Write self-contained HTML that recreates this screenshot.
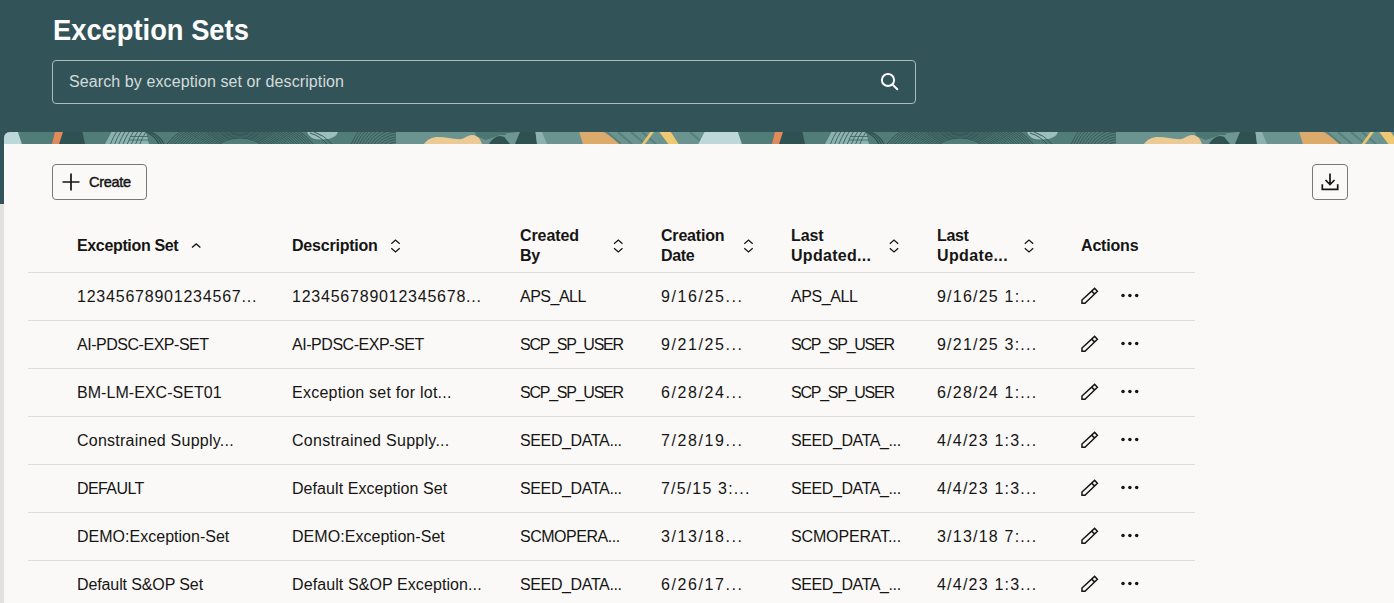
<!DOCTYPE html>
<html><head><meta charset="utf-8">
<style>
html,body{margin:0;padding:0;}
body{width:1394px;height:603px;overflow:hidden;position:relative;background:#e2e1df;font-family:"Liberation Sans",sans-serif;color:#161513;}
#hdr{position:absolute;left:0;top:0;width:1394px;height:204px;background:#325459;}
#title{position:absolute;left:53px;top:12px;font-size:29.5px;line-height:36px;font-weight:700;color:#fff;white-space:nowrap;transform:scaleX(0.926);transform-origin:0 0;}
#search{position:absolute;left:52px;top:60px;width:862px;height:42px;border:1px solid #adbcbc;border-radius:4px;}
#ph{position:absolute;left:16px;top:11px;font-size:16px;line-height:20px;color:#d4dbd9;white-space:nowrap;letter-spacing:0.1px;}
#panel{position:absolute;left:4px;top:132px;width:1400px;height:480px;background:#faf9f8;border-top-left-radius:6px;overflow:hidden;}
#banner{position:absolute;left:0;top:0;}
.btn{position:absolute;border:1px solid #787878;border-radius:4px;box-sizing:border-box;}
.t{position:absolute;white-space:nowrap;font-size:16px;line-height:20px;}
.h{font-weight:700;}
.line{position:absolute;left:24px;width:1167px;height:1px;background:#dfddda;}
#icons{position:absolute;left:0;top:0;}
</style></head>
<body>
<div id="hdr">
  <div id="title">Exception Sets</div>
  <div id="search"><div id="ph">Search by exception set or description</div></div>
</div>
<div id="panel">
  <svg id="banner" width="1400" height="12" viewBox="0 0 1400 12"><rect x="0" y="0" width="1400" height="12" fill="#517c77"/><g transform="translate(-4 0)"><polygon points="-15.5,0 18,0 21.8,12 -21.6,12" fill="#bed7d9"/><polygon points="54.9,0 63.1,0 59.2,12 52,12" fill="#e3895a"/><polygon points="63.1,0 82.5,0 85,12 59.2,12" fill="#2f5152"/><polygon points="111.5,0 146,0 149,12 105,12" fill="#8db3b0"/><path d="M116.5 0 Q113.0 5 110.5 12" stroke="#3b5f5e" stroke-width="0.9" fill="none"/><path d="M120.7 0 Q117.2 5 114.7 12" stroke="#3b5f5e" stroke-width="0.9" fill="none"/><path d="M124.9 0 Q121.4 5 118.9 12" stroke="#3b5f5e" stroke-width="0.9" fill="none"/><path d="M129.1 0 Q125.6 5 123.1 12" stroke="#3b5f5e" stroke-width="0.9" fill="none"/><path d="M133.3 0 Q129.8 5 127.30000000000001 12" stroke="#3b5f5e" stroke-width="0.9" fill="none"/><path d="M137.5 0 Q134.0 5 131.5 12" stroke="#3b5f5e" stroke-width="0.9" fill="none"/><path d="M141.7 0 Q138.2 5 135.7 12" stroke="#3b5f5e" stroke-width="0.9" fill="none"/><path d="M145.9 0 Q142.4 5 139.9 12" stroke="#3b5f5e" stroke-width="0.9" fill="none"/><path d="M130 4.5H148M129 8H149" stroke="#3b5f5e" stroke-width="0.8"/><path d="M146.0 0 Q155.0 4 159.0 12" stroke="#2f4f50" stroke-width="1.1" fill="none"/><path d="M148.5 0 Q157.5 4 161.5 12" stroke="#2f4f50" stroke-width="1.1" fill="none"/><path d="M151.0 0 Q160.0 4 164.0 12" stroke="#2f4f50" stroke-width="1.1" fill="none"/><ellipse cx="240" cy="40" rx="36.0" ry="34.0" stroke="#2f4f50" stroke-width="1" fill="none" opacity="0.85"/><ellipse cx="240" cy="40" rx="38.5" ry="35.2" stroke="#2f4f50" stroke-width="1" fill="none" opacity="0.85"/><ellipse cx="240" cy="40" rx="41.0" ry="36.5" stroke="#2f4f50" stroke-width="1" fill="none" opacity="0.85"/><ellipse cx="240" cy="40" rx="43.5" ry="37.8" stroke="#2f4f50" stroke-width="1" fill="none" opacity="0.85"/><ellipse cx="240" cy="40" rx="46.0" ry="39.0" stroke="#2f4f50" stroke-width="1" fill="none" opacity="0.85"/><ellipse cx="240" cy="40" rx="48.5" ry="40.2" stroke="#2f4f50" stroke-width="1" fill="none" opacity="0.85"/><ellipse cx="240" cy="40" rx="51.0" ry="41.5" stroke="#2f4f50" stroke-width="1" fill="none" opacity="0.85"/><ellipse cx="240" cy="40" rx="53.5" ry="42.8" stroke="#2f4f50" stroke-width="1" fill="none" opacity="0.85"/><ellipse cx="240" cy="40" rx="56.0" ry="44.0" stroke="#2f4f50" stroke-width="1" fill="none" opacity="0.85"/><ellipse cx="240" cy="40" rx="58.5" ry="45.2" stroke="#2f4f50" stroke-width="1" fill="none" opacity="0.85"/><ellipse cx="240" cy="40" rx="61.0" ry="46.5" stroke="#2f4f50" stroke-width="1" fill="none" opacity="0.85"/><ellipse cx="240" cy="40" rx="63.5" ry="47.8" stroke="#2f4f50" stroke-width="1" fill="none" opacity="0.85"/><ellipse cx="240" cy="40" rx="66.0" ry="49.0" stroke="#2f4f50" stroke-width="1" fill="none" opacity="0.85"/><ellipse cx="240" cy="40" rx="68.5" ry="50.2" stroke="#2f4f50" stroke-width="1" fill="none" opacity="0.85"/><ellipse cx="240" cy="40" rx="71.0" ry="51.5" stroke="#2f4f50" stroke-width="1" fill="none" opacity="0.85"/><ellipse cx="240" cy="40" rx="73.5" ry="52.8" stroke="#2f4f50" stroke-width="1" fill="none" opacity="0.85"/><ellipse cx="240" cy="40" rx="76.0" ry="54.0" stroke="#2f4f50" stroke-width="1" fill="none" opacity="0.85"/><ellipse cx="240" cy="40" rx="78.5" ry="55.2" stroke="#2f4f50" stroke-width="1" fill="none" opacity="0.85"/><ellipse cx="240" cy="40" rx="81.0" ry="56.5" stroke="#2f4f50" stroke-width="1" fill="none" opacity="0.85"/><ellipse cx="240" cy="40" rx="83.5" ry="57.8" stroke="#2f4f50" stroke-width="1" fill="none" opacity="0.85"/><path d="M307 0 Q309 8 323 7.6 Q336 7 338 0Z" fill="#9bbfbc"/><path d="M310 1 Q320 4 327 12M314 0 Q324 3 332 12" stroke="#2f4f50" stroke-width="0.9" fill="none"/><circle cx="398" cy="30" r="20.0" stroke="#2f4f50" stroke-width="0.9" fill="none" opacity="0.85"/><circle cx="398" cy="30" r="22.5" stroke="#2f4f50" stroke-width="0.9" fill="none" opacity="0.85"/><circle cx="398" cy="30" r="25.0" stroke="#2f4f50" stroke-width="0.9" fill="none" opacity="0.85"/><circle cx="398" cy="30" r="27.5" stroke="#2f4f50" stroke-width="0.9" fill="none" opacity="0.85"/><circle cx="398" cy="30" r="30.0" stroke="#2f4f50" stroke-width="0.9" fill="none" opacity="0.85"/><circle cx="398" cy="30" r="32.5" stroke="#2f4f50" stroke-width="0.9" fill="none" opacity="0.85"/><circle cx="398" cy="30" r="35.0" stroke="#2f4f50" stroke-width="0.9" fill="none" opacity="0.85"/><circle cx="398" cy="30" r="37.5" stroke="#2f4f50" stroke-width="0.9" fill="none" opacity="0.85"/><circle cx="398" cy="30" r="40.0" stroke="#2f4f50" stroke-width="0.9" fill="none" opacity="0.85"/><circle cx="398" cy="30" r="42.5" stroke="#2f4f50" stroke-width="0.9" fill="none" opacity="0.85"/><circle cx="398" cy="30" r="45.0" stroke="#2f4f50" stroke-width="0.9" fill="none" opacity="0.85"/><circle cx="398" cy="30" r="47.5" stroke="#2f4f50" stroke-width="0.9" fill="none" opacity="0.85"/><circle cx="398" cy="30" r="50.0" stroke="#2f4f50" stroke-width="0.9" fill="none" opacity="0.85"/><rect x="396" y="0" width="308" height="12" fill="#6b9490"/><path d="M424 12 C428 7 432 5 438 5 C446 5 452 7 459 7.2 C465 7.4 467 3 472 3 C477 3 480 6 482 12Z" fill="#ecca96"/><polygon points="475,0 522,0 520,3 500,3 486,8 476,4" fill="#4c7672"/><path d="M489 12 Q494 4 500 4 Q506 4 511 12Z" fill="#2f5152"/><polygon points="506,1.5 518,0 521,0 516,12 510,12 505,6" fill="#6e9692"/><polygon points="520,0 535.5,0 537,12 515,12" fill="#2f5152"/><polygon points="535.5,0 542,0 547,12 537,12" fill="#8cb1ae"/><polygon points="579.3,0 603.7,0 622.4,12 582.9,12" fill="#dcab6b"/><path d="M607 0 L621 12" stroke="#57817d" stroke-width="2.2"/><path d="M618 0 L632 12" stroke="#57817d" stroke-width="2.2"/><path d="M631 0 L645 12" stroke="#57817d" stroke-width="2.2"/><path d="M642 0 L656 12" stroke="#57817d" stroke-width="2.2"/><path d="M690 0 L704 12" stroke="#57817d" stroke-width="2.2"/><polygon points="650.3,0 654,0 645,12 641.7,12" fill="#ecc56f"/><polygon points="659.3,0 670.8,0 678.7,12 668.3,12" fill="#efc872"/></g><g transform="translate(716 0)"><polygon points="-15.5,0 18,0 21.8,12 -21.6,12" fill="#bed7d9"/><polygon points="54.9,0 63.1,0 59.2,12 52,12" fill="#e3895a"/><polygon points="63.1,0 82.5,0 85,12 59.2,12" fill="#2f5152"/><polygon points="111.5,0 146,0 149,12 105,12" fill="#8db3b0"/><path d="M116.5 0 Q113.0 5 110.5 12" stroke="#3b5f5e" stroke-width="0.9" fill="none"/><path d="M120.7 0 Q117.2 5 114.7 12" stroke="#3b5f5e" stroke-width="0.9" fill="none"/><path d="M124.9 0 Q121.4 5 118.9 12" stroke="#3b5f5e" stroke-width="0.9" fill="none"/><path d="M129.1 0 Q125.6 5 123.1 12" stroke="#3b5f5e" stroke-width="0.9" fill="none"/><path d="M133.3 0 Q129.8 5 127.30000000000001 12" stroke="#3b5f5e" stroke-width="0.9" fill="none"/><path d="M137.5 0 Q134.0 5 131.5 12" stroke="#3b5f5e" stroke-width="0.9" fill="none"/><path d="M141.7 0 Q138.2 5 135.7 12" stroke="#3b5f5e" stroke-width="0.9" fill="none"/><path d="M145.9 0 Q142.4 5 139.9 12" stroke="#3b5f5e" stroke-width="0.9" fill="none"/><path d="M130 4.5H148M129 8H149" stroke="#3b5f5e" stroke-width="0.8"/><path d="M146.0 0 Q155.0 4 159.0 12" stroke="#2f4f50" stroke-width="1.1" fill="none"/><path d="M148.5 0 Q157.5 4 161.5 12" stroke="#2f4f50" stroke-width="1.1" fill="none"/><path d="M151.0 0 Q160.0 4 164.0 12" stroke="#2f4f50" stroke-width="1.1" fill="none"/><ellipse cx="240" cy="40" rx="36.0" ry="34.0" stroke="#2f4f50" stroke-width="1" fill="none" opacity="0.85"/><ellipse cx="240" cy="40" rx="38.5" ry="35.2" stroke="#2f4f50" stroke-width="1" fill="none" opacity="0.85"/><ellipse cx="240" cy="40" rx="41.0" ry="36.5" stroke="#2f4f50" stroke-width="1" fill="none" opacity="0.85"/><ellipse cx="240" cy="40" rx="43.5" ry="37.8" stroke="#2f4f50" stroke-width="1" fill="none" opacity="0.85"/><ellipse cx="240" cy="40" rx="46.0" ry="39.0" stroke="#2f4f50" stroke-width="1" fill="none" opacity="0.85"/><ellipse cx="240" cy="40" rx="48.5" ry="40.2" stroke="#2f4f50" stroke-width="1" fill="none" opacity="0.85"/><ellipse cx="240" cy="40" rx="51.0" ry="41.5" stroke="#2f4f50" stroke-width="1" fill="none" opacity="0.85"/><ellipse cx="240" cy="40" rx="53.5" ry="42.8" stroke="#2f4f50" stroke-width="1" fill="none" opacity="0.85"/><ellipse cx="240" cy="40" rx="56.0" ry="44.0" stroke="#2f4f50" stroke-width="1" fill="none" opacity="0.85"/><ellipse cx="240" cy="40" rx="58.5" ry="45.2" stroke="#2f4f50" stroke-width="1" fill="none" opacity="0.85"/><ellipse cx="240" cy="40" rx="61.0" ry="46.5" stroke="#2f4f50" stroke-width="1" fill="none" opacity="0.85"/><ellipse cx="240" cy="40" rx="63.5" ry="47.8" stroke="#2f4f50" stroke-width="1" fill="none" opacity="0.85"/><ellipse cx="240" cy="40" rx="66.0" ry="49.0" stroke="#2f4f50" stroke-width="1" fill="none" opacity="0.85"/><ellipse cx="240" cy="40" rx="68.5" ry="50.2" stroke="#2f4f50" stroke-width="1" fill="none" opacity="0.85"/><ellipse cx="240" cy="40" rx="71.0" ry="51.5" stroke="#2f4f50" stroke-width="1" fill="none" opacity="0.85"/><ellipse cx="240" cy="40" rx="73.5" ry="52.8" stroke="#2f4f50" stroke-width="1" fill="none" opacity="0.85"/><ellipse cx="240" cy="40" rx="76.0" ry="54.0" stroke="#2f4f50" stroke-width="1" fill="none" opacity="0.85"/><ellipse cx="240" cy="40" rx="78.5" ry="55.2" stroke="#2f4f50" stroke-width="1" fill="none" opacity="0.85"/><ellipse cx="240" cy="40" rx="81.0" ry="56.5" stroke="#2f4f50" stroke-width="1" fill="none" opacity="0.85"/><ellipse cx="240" cy="40" rx="83.5" ry="57.8" stroke="#2f4f50" stroke-width="1" fill="none" opacity="0.85"/><path d="M307 0 Q309 8 323 7.6 Q336 7 338 0Z" fill="#9bbfbc"/><path d="M310 1 Q320 4 327 12M314 0 Q324 3 332 12" stroke="#2f4f50" stroke-width="0.9" fill="none"/><circle cx="398" cy="30" r="20.0" stroke="#2f4f50" stroke-width="0.9" fill="none" opacity="0.85"/><circle cx="398" cy="30" r="22.5" stroke="#2f4f50" stroke-width="0.9" fill="none" opacity="0.85"/><circle cx="398" cy="30" r="25.0" stroke="#2f4f50" stroke-width="0.9" fill="none" opacity="0.85"/><circle cx="398" cy="30" r="27.5" stroke="#2f4f50" stroke-width="0.9" fill="none" opacity="0.85"/><circle cx="398" cy="30" r="30.0" stroke="#2f4f50" stroke-width="0.9" fill="none" opacity="0.85"/><circle cx="398" cy="30" r="32.5" stroke="#2f4f50" stroke-width="0.9" fill="none" opacity="0.85"/><circle cx="398" cy="30" r="35.0" stroke="#2f4f50" stroke-width="0.9" fill="none" opacity="0.85"/><circle cx="398" cy="30" r="37.5" stroke="#2f4f50" stroke-width="0.9" fill="none" opacity="0.85"/><circle cx="398" cy="30" r="40.0" stroke="#2f4f50" stroke-width="0.9" fill="none" opacity="0.85"/><circle cx="398" cy="30" r="42.5" stroke="#2f4f50" stroke-width="0.9" fill="none" opacity="0.85"/><circle cx="398" cy="30" r="45.0" stroke="#2f4f50" stroke-width="0.9" fill="none" opacity="0.85"/><circle cx="398" cy="30" r="47.5" stroke="#2f4f50" stroke-width="0.9" fill="none" opacity="0.85"/><circle cx="398" cy="30" r="50.0" stroke="#2f4f50" stroke-width="0.9" fill="none" opacity="0.85"/><rect x="396" y="0" width="308" height="12" fill="#6b9490"/><path d="M424 12 C428 7 432 5 438 5 C446 5 452 7 459 7.2 C465 7.4 467 3 472 3 C477 3 480 6 482 12Z" fill="#ecca96"/><polygon points="475,0 522,0 520,3 500,3 486,8 476,4" fill="#4c7672"/><path d="M489 12 Q494 4 500 4 Q506 4 511 12Z" fill="#2f5152"/><polygon points="506,1.5 518,0 521,0 516,12 510,12 505,6" fill="#6e9692"/><polygon points="520,0 535.5,0 537,12 515,12" fill="#2f5152"/><polygon points="535.5,0 542,0 547,12 537,12" fill="#8cb1ae"/><polygon points="579.3,0 603.7,0 622.4,12 582.9,12" fill="#dcab6b"/><path d="M607 0 L621 12" stroke="#57817d" stroke-width="2.2"/><path d="M618 0 L632 12" stroke="#57817d" stroke-width="2.2"/><path d="M631 0 L645 12" stroke="#57817d" stroke-width="2.2"/><path d="M642 0 L656 12" stroke="#57817d" stroke-width="2.2"/><path d="M690 0 L704 12" stroke="#57817d" stroke-width="2.2"/><polygon points="650.3,0 654,0 645,12 641.7,12" fill="#ecc56f"/><polygon points="659.3,0 670.8,0 678.7,12 668.3,12" fill="#efc872"/></g></svg>
  <div class="btn" style="left:48px;top:32px;width:95px;height:36px;">
    <div class="t" style="left:36px;top:7px;font-size:14.5px;letter-spacing:-0.3px;-webkit-text-stroke:0.45px #161513">Create</div>
  </div>
  <div class="btn" style="left:1308px;top:32px;width:36px;height:36px;"></div>
<div class="t h" style="left:73px;top:104.46px;letter-spacing:-0.351px">Exception Set</div>
<div class="t h" style="left:288px;top:104.46px;letter-spacing:-0.212px">Description</div>
<div class="t h" style="left:516px;top:94.06px;letter-spacing:-0.080px">Created</div>
<div class="t h" style="left:516px;top:114.06px;letter-spacing:-0.350px">By</div>
<div class="t h" style="left:657px;top:94.06px;letter-spacing:-0.187px">Creation</div>
<div class="t h" style="left:657px;top:114.06px;letter-spacing:-0.350px">Date</div>
<div class="t h" style="left:787px;top:94.06px;letter-spacing:-0.102px">Last</div>
<div class="t h" style="left:787px;top:114.06px;letter-spacing:0.295px">Updated...</div>
<div class="t h" style="left:933px;top:94.06px;letter-spacing:-0.350px">Last</div>
<div class="t h" style="left:933px;top:114.06px;letter-spacing:0.380px">Update...</div>
<div class="t h" style="left:1077px;top:104.46px;letter-spacing:-0.179px">Actions</div>
<div class="t" style="left:73px;top:155.46px;letter-spacing:0.778px">12345678901234567...</div>
<div class="t" style="left:288px;top:155.46px;letter-spacing:0.774px">123456789012345678...</div>
<div class="t" style="left:516px;top:155.46px;letter-spacing:-0.498px">APS_ALL</div>
<div class="t" style="left:657px;top:155.46px;letter-spacing:1.576px">9/16/25...</div>
<div class="t" style="left:787px;top:155.46px;letter-spacing:-0.398px">APS_ALL</div>
<div class="t" style="left:933px;top:155.46px;letter-spacing:1.215px">9/16/25 1:...</div>
<div class="t" style="left:73px;top:203.46px;letter-spacing:-0.471px">AI-PDSC-EXP-SET</div>
<div class="t" style="left:288px;top:203.46px;letter-spacing:-0.456px">AI-PDSC-EXP-SET</div>
<div class="t" style="left:516px;top:203.46px;letter-spacing:-1.240px">SCP_SP_USER</div>
<div class="t" style="left:657px;top:203.46px;letter-spacing:1.576px">9/21/25...</div>
<div class="t" style="left:787px;top:203.46px;letter-spacing:-1.250px">SCP_SP_USER</div>
<div class="t" style="left:933px;top:203.46px;letter-spacing:1.215px">9/21/25 3:...</div>
<div class="t" style="left:73px;top:251.46px;letter-spacing:0.041px">BM-LM-EXC-SET01</div>
<div class="t" style="left:288px;top:251.46px;letter-spacing:0.241px">Exception set for lot...</div>
<div class="t" style="left:516px;top:251.46px;letter-spacing:-1.240px">SCP_SP_USER</div>
<div class="t" style="left:657px;top:251.46px;letter-spacing:1.576px">6/28/24...</div>
<div class="t" style="left:787px;top:251.46px;letter-spacing:-1.250px">SCP_SP_USER</div>
<div class="t" style="left:933px;top:251.46px;letter-spacing:1.215px">6/28/24 1:...</div>
<div class="t" style="left:73px;top:299.46px;letter-spacing:0.240px">Constrained Supply...</div>
<div class="t" style="left:288px;top:299.46px;letter-spacing:0.275px">Constrained Supply...</div>
<div class="t" style="left:516px;top:299.46px;letter-spacing:-0.374px">SEED_DATA...</div>
<div class="t" style="left:657px;top:299.46px;letter-spacing:1.576px">7/28/19...</div>
<div class="t" style="left:787px;top:299.46px;letter-spacing:-0.408px">SEED_DATA_...</div>
<div class="t" style="left:933px;top:299.46px;letter-spacing:1.215px">4/4/23 1:3...</div>
<div class="t" style="left:73px;top:347.46px;letter-spacing:-0.588px">DEFAULT</div>
<div class="t" style="left:288px;top:347.46px;letter-spacing:0.066px">Default Exception Set</div>
<div class="t" style="left:516px;top:347.46px;letter-spacing:-0.374px">SEED_DATA...</div>
<div class="t" style="left:657px;top:347.46px;letter-spacing:1.163px">7/5/15 3:...</div>
<div class="t" style="left:787px;top:347.46px;letter-spacing:-0.408px">SEED_DATA_...</div>
<div class="t" style="left:933px;top:347.46px;letter-spacing:1.215px">4/4/23 1:3...</div>
<div class="t" style="left:73px;top:395.46px;letter-spacing:0.014px">DEMO:Exception-Set</div>
<div class="t" style="left:288px;top:395.46px;letter-spacing:0.043px">DEMO:Exception-Set</div>
<div class="t" style="left:516px;top:395.46px;letter-spacing:-0.481px">SCMOPERA...</div>
<div class="t" style="left:657px;top:395.46px;letter-spacing:1.576px">3/13/18...</div>
<div class="t" style="left:787px;top:395.46px;letter-spacing:-0.147px">SCMOPERAT...</div>
<div class="t" style="left:933px;top:395.46px;letter-spacing:1.215px">3/13/18 7:...</div>
<div class="t" style="left:73px;top:443.46px;letter-spacing:-0.112px">Default S&amp;OP Set</div>
<div class="t" style="left:288px;top:443.46px;letter-spacing:0.093px">Default S&amp;OP Exception...</div>
<div class="t" style="left:516px;top:443.46px;letter-spacing:-0.374px">SEED_DATA...</div>
<div class="t" style="left:657px;top:443.46px;letter-spacing:1.576px">6/26/17...</div>
<div class="t" style="left:787px;top:443.46px;letter-spacing:-0.408px">SEED_DATA_...</div>
<div class="t" style="left:933px;top:443.46px;letter-spacing:1.215px">4/4/23 1:3...</div>
<div class="line" style="top:140px"></div>
<div class="line" style="top:188px"></div>
<div class="line" style="top:236px"></div>
<div class="line" style="top:284px"></div>
<div class="line" style="top:332px"></div>
<div class="line" style="top:380px"></div>
<div class="line" style="top:428px"></div>
</div>
<svg id="icons" width="1394" height="603" viewBox="0 0 1394 603"><circle cx="888" cy="80" r="6.1" fill="none" stroke="#fff" stroke-width="2"/><path d="M892.6 84.6 L897.3 89.3" stroke="#fff" stroke-width="2" stroke-linecap="round"/><path d="M62.5 182H79.5M71 173.5V190.5" stroke="#161513" stroke-width="1.7" fill="none"/><path d="M1330 173.5V184.5M1325.5 180L1330 184.5L1334.5 180M1322.3 184.2V189.3H1337.7V184.2" stroke="#161513" stroke-width="1.7" fill="none"/><path d="M192 247.4L196.2 243.9L200.4 247.4" stroke="#161513" stroke-width="1.35" fill="none"/><path d="M391.3 243.7L395.5 240.1L399.7 243.7M391.3 248.3L395.5 251.9L399.7 248.3" stroke="#161513" stroke-width="1.3" fill="none"/><path d="M614.0999999999999 243.7L618.3 240.1L622.5 243.7M614.0999999999999 248.3L618.3 251.9L622.5 248.3" stroke="#161513" stroke-width="1.3" fill="none"/><path d="M744.3 243.7L748.5 240.1L752.7 243.7M744.3 248.3L748.5 251.9L752.7 248.3" stroke="#161513" stroke-width="1.3" fill="none"/><path d="M889.8 243.7L894 240.1L898.2 243.7M889.8 248.3L894 251.9L898.2 248.3" stroke="#161513" stroke-width="1.3" fill="none"/><path d="M1024.8 243.7L1029 240.1L1033.2 243.7M1024.8 248.3L1029 251.9L1033.2 248.3" stroke="#161513" stroke-width="1.3" fill="none"/><g transform="translate(0 0)"><path d="M1082 303.2V300L1094.6 288.4L1097.4 291.3L1085 303.2Z M1091.7 291.1L1094.7 294.1" stroke="#161513" stroke-width="1.5" fill="none" stroke-linejoin="miter"/><circle cx="1123" cy="295.4" r="1.75" fill="#161513"/><circle cx="1129.9" cy="295.4" r="1.75" fill="#161513"/><circle cx="1136.7" cy="295.4" r="1.75" fill="#161513"/></g><g transform="translate(0 48)"><path d="M1082 303.2V300L1094.6 288.4L1097.4 291.3L1085 303.2Z M1091.7 291.1L1094.7 294.1" stroke="#161513" stroke-width="1.5" fill="none" stroke-linejoin="miter"/><circle cx="1123" cy="295.4" r="1.75" fill="#161513"/><circle cx="1129.9" cy="295.4" r="1.75" fill="#161513"/><circle cx="1136.7" cy="295.4" r="1.75" fill="#161513"/></g><g transform="translate(0 96)"><path d="M1082 303.2V300L1094.6 288.4L1097.4 291.3L1085 303.2Z M1091.7 291.1L1094.7 294.1" stroke="#161513" stroke-width="1.5" fill="none" stroke-linejoin="miter"/><circle cx="1123" cy="295.4" r="1.75" fill="#161513"/><circle cx="1129.9" cy="295.4" r="1.75" fill="#161513"/><circle cx="1136.7" cy="295.4" r="1.75" fill="#161513"/></g><g transform="translate(0 144)"><path d="M1082 303.2V300L1094.6 288.4L1097.4 291.3L1085 303.2Z M1091.7 291.1L1094.7 294.1" stroke="#161513" stroke-width="1.5" fill="none" stroke-linejoin="miter"/><circle cx="1123" cy="295.4" r="1.75" fill="#161513"/><circle cx="1129.9" cy="295.4" r="1.75" fill="#161513"/><circle cx="1136.7" cy="295.4" r="1.75" fill="#161513"/></g><g transform="translate(0 192)"><path d="M1082 303.2V300L1094.6 288.4L1097.4 291.3L1085 303.2Z M1091.7 291.1L1094.7 294.1" stroke="#161513" stroke-width="1.5" fill="none" stroke-linejoin="miter"/><circle cx="1123" cy="295.4" r="1.75" fill="#161513"/><circle cx="1129.9" cy="295.4" r="1.75" fill="#161513"/><circle cx="1136.7" cy="295.4" r="1.75" fill="#161513"/></g><g transform="translate(0 240)"><path d="M1082 303.2V300L1094.6 288.4L1097.4 291.3L1085 303.2Z M1091.7 291.1L1094.7 294.1" stroke="#161513" stroke-width="1.5" fill="none" stroke-linejoin="miter"/><circle cx="1123" cy="295.4" r="1.75" fill="#161513"/><circle cx="1129.9" cy="295.4" r="1.75" fill="#161513"/><circle cx="1136.7" cy="295.4" r="1.75" fill="#161513"/></g><g transform="translate(0 288)"><path d="M1082 303.2V300L1094.6 288.4L1097.4 291.3L1085 303.2Z M1091.7 291.1L1094.7 294.1" stroke="#161513" stroke-width="1.5" fill="none" stroke-linejoin="miter"/><circle cx="1123" cy="295.4" r="1.75" fill="#161513"/><circle cx="1129.9" cy="295.4" r="1.75" fill="#161513"/><circle cx="1136.7" cy="295.4" r="1.75" fill="#161513"/></g></svg>
</body></html>
